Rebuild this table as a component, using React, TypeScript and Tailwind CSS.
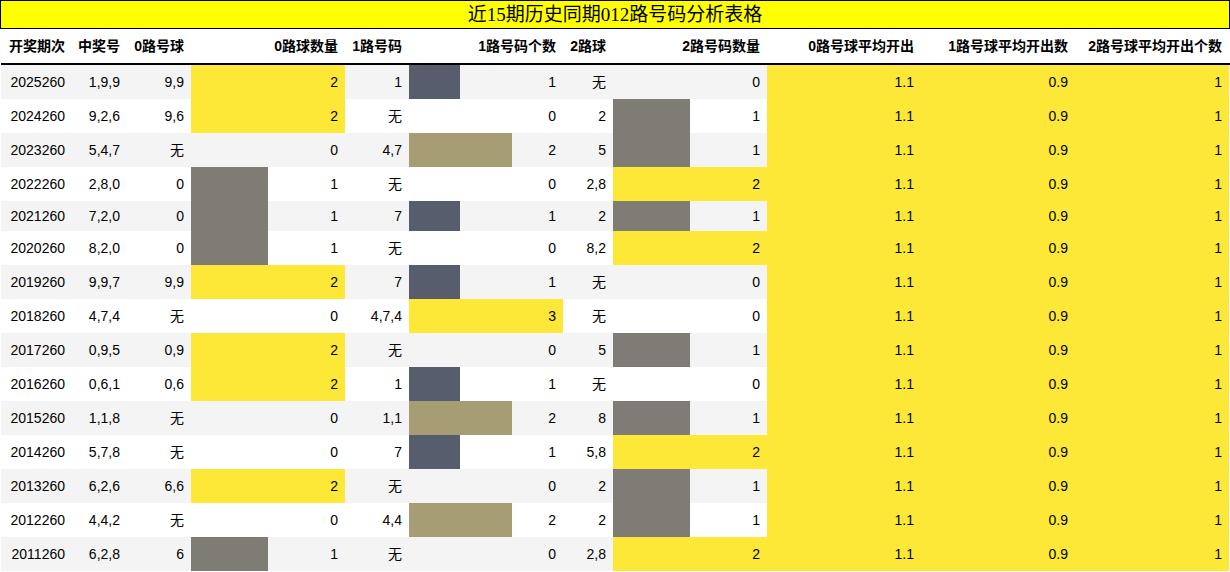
import React from 'react'

type Row = [string, string, string, number, string, number, string, number]

const rows: Row[] = [
  ['2025260', '1,9,9', '9,9', 2, '1', 1, '无', 0],
  ['2024260', '9,2,6', '9,6', 2, '无', 0, '2', 1],
  ['2023260', '5,4,7', '无', 0, '4,7', 2, '5', 1],
  ['2022260', '2,8,0', '0', 1, '无', 0, '2,8', 2],
  ['2021260', '7,2,0', '0', 1, '7', 1, '2', 1],
  ['2020260', '8,2,0', '0', 1, '无', 0, '8,2', 2],
  ['2019260', '9,9,7', '9,9', 2, '7', 1, '无', 0],
  ['2018260', '4,7,4', '无', 0, '4,7,4', 3, '无', 0],
  ['2017260', '0,9,5', '0,9', 2, '无', 0, '5', 1],
  ['2016260', '0,6,1', '0,6', 2, '1', 1, '无', 0],
  ['2015260', '1,1,8', '无', 0, '1,1', 2, '8', 1],
  ['2014260', '5,7,8', '无', 0, '7', 1, '5,8', 2],
  ['2013260', '6,2,6', '6,6', 2, '无', 0, '2', 1],
  ['2012260', '4,4,2', '无', 0, '4,4', 2, '2', 1],
  ['2011260', '6,2,8', '6', 1, '无', 0, '2,8', 2],
]

const headers = [
  '开奖期次',
  '中奖号',
  '0路号球',
  '0路球数量',
  '1路号码',
  '1路号码个数',
  '2路球',
  '2路号码数量',
  '0路号球平均开出',
  '1路号球平均开出数',
  '2路号球平均开出个数',
]

const cols =
  'grid grid-cols-[71px_55px_64px_154px_64px_154px_50px_154px_154px_154px_154px]'

// cividis-like scale, picked by share of the column max
function barColor(v: number, max: number) {
  const r = v / max
  if (r >= 1) return 'bg-[#fde838]'
  if (r > 0.6) return 'bg-[#a69d75]'
  if (r > 0.4) return 'bg-[#7e7c75]'
  return 'bg-[#575d6d]'
}

function Cell({ children }: { children: React.ReactNode }) {
  return <div className="flex items-center justify-end pr-[7px]">{children}</div>
}

function BarCell({ value, max }: { value: number; max: number }) {
  return (
    <div className="relative flex items-center justify-end pr-[7px]">
      {value > 0 && (
        <div
          className={`absolute left-0 top-0 bottom-0 ${barColor(value, max)}`}
          style={{ width: `${(value / max) * 100}%` }}
        />
      )}
      <span className="relative">{value}</span>
    </div>
  )
}

function AvgCell({ children }: { children: React.ReactNode }) {
  return (
    <div className="flex items-center justify-end pr-[7px] bg-[#fde838]">{children}</div>
  )
}

export default function App() {
  return (
    <div
      className="w-[1230px] h-[572px] overflow-hidden bg-white text-black"
      style={{ fontFamily: '"Liberation Sans", "Noto Sans CJK SC", sans-serif' }}
    >
      <div
        className="h-[29px] border border-black bg-[#ffff00] flex items-center justify-center text-[19px] leading-none"
        style={{ fontFamily: '"Liberation Serif", "Noto Sans CJK SC", serif' }}
      >
        近15期历史同期012路号码分析表格
      </div>

      <div className="ml-[1px]">
        <div className={`${cols} h-[36px] border-b-2 border-black text-sm font-bold`}>
          {headers.map((h) => (
            <Cell key={h}>{h}</Cell>
          ))}
        </div>

        {rows.map((r, i) => {
          // rows holding the CJK glyph get the taller line box
          const tall = r.includes('无')
          return (
            <div
              key={r[0]}
              className={`${cols} ${tall ? 'h-[34px]' : 'h-[30px]'} text-sm ${
                i % 2 === 0 ? 'bg-[#f4f4f4]' : 'bg-white'
              }`}
            >
              <Cell>{r[0]}</Cell>
              <Cell>{r[1]}</Cell>
              <Cell>{r[2]}</Cell>
              <BarCell value={r[3]} max={2} />
              <Cell>{r[4]}</Cell>
              <BarCell value={r[5]} max={3} />
              <Cell>{r[6]}</Cell>
              <BarCell value={r[7]} max={2} />
              <AvgCell>1.1</AvgCell>
              <AvgCell>0.9</AvgCell>
              <AvgCell>1</AvgCell>
            </div>
          )
        })}
      </div>
    </div>
  )
}
